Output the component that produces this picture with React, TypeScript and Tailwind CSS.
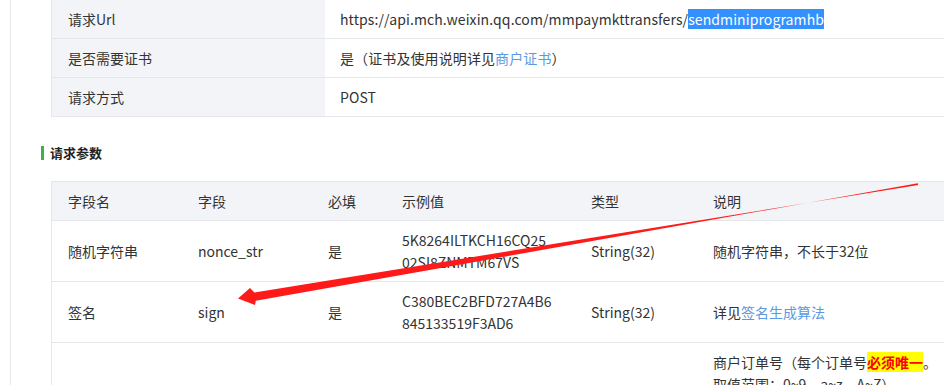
import React from "react"

const font = { fontFamily: '"Noto Sans CJK SC", "Noto Sans", sans-serif' }

const infoRows: { label: string; value: React.ReactNode }[] = [
  {
    label: "请求Url",
    value: (
      <>
        https://api.mch.weixin.qq.com/mmpaymkttransfers/
        <span className="bg-[#3390ff] text-white">sendminiprogramhb</span>
      </>
    ),
  },
  {
    label: "是否需要证书",
    value: (
      <>
        是（证书及使用说明详见<span className="text-[#5b99e3]">商户证书</span>）
      </>
    ),
  },
  { label: "请求方式", value: "POST" },
]

const colWidths = ["w-[130px]", "w-[130px]", "w-[74px]", "w-[189px]", "w-[122px]", "w-[260px]"]

const params: React.ReactNode[][] = [
  ["字段名", "字段", "必填", "示例值", "类型", "说明"],
  [
    "随机字符串",
    "nonce_str",
    "是",
    <>
      5K8264ILTKCH16CQ25
      <br />
      02SI8ZNMTM67VS
    </>,
    "String(32)",
    "随机字符串，不长于32位",
  ],
  [
    "签名",
    "sign",
    "是",
    <>
      C380BEC2BFD727A4B6
      <br />
      845133519F3AD6
    </>,
    "String(32)",
    <>
      详见<span className="text-[#5b99e3]">签名生成算法</span>
    </>,
  ],
]

function Arrow() {
  // tapered red annotation arrow pointing at the "sign" row
  return (
    <svg className="absolute left-0 top-0 pointer-events-none" width="944" height="385">
      <polygon
        fill="#ff1a1a"
        points="238,298.5 250,288 254.5,292.4 918.2,184.9 917.8,183.2 255.8,300.8 255,305"
      />
    </svg>
  )
}

export default function App() {
  return (
    <div className="relative w-[944px] h-[385px] overflow-hidden bg-white text-[14px] text-[#333] leading-[22px]" style={font}>
      <div className="flex h-full">
        <div className="w-[11px] shrink-0 border-r border-[#e6e7ea]" />
        <div className="flex-1">
          {/* request info table */}
          <div className="ml-[40px] w-[1000px] border-l border-[#e4e6eb]">
            {infoRows.map((row) => (
              <div key={row.label} className="flex border-b border-[#e4e6eb]">
                <div className="w-[273px] shrink-0 bg-[#f3f4f8] py-2 pl-4">{row.label}</div>
                <div className="flex-1 py-2 pl-[15px] whitespace-nowrap tracking-[0.1px]">{row.value}</div>
              </div>
            ))}
          </div>

          <div className="flex items-center ml-[30px] mt-[29px] h-[14px]">
            <div className="w-[3px] h-[14px] bg-[#3cb34a]" />
            <div className="ml-[6px] text-[13px] font-bold text-[#222]">请求参数</div>
          </div>

          {/* request params table */}
          <div className="ml-[40px] mt-[21px] w-[1000px] border-l border-t border-[#e4e6eb]">
            {params.map((row, i) => (
              <div key={i} className={`flex border-b border-[#e4e6eb] ${i === 0 ? "bg-[#f3f4f8]" : ""}`}>
                {row.map((cell, j) => (
                  <div key={j} className={`${colWidths[j]} shrink-0 flex items-center py-2 pl-4 whitespace-nowrap`}>
                    <div>{cell}</div>
                  </div>
                ))}
              </div>
            ))}
            <div className="flex border-b border-[#e4e6eb]">
              <div className="w-[645px] shrink-0" />
              <div className="w-[260px] py-2 pl-4 whitespace-nowrap">
                商户订单号（每个订单号<span className="bg-[#ffff00] text-[#ff0000] font-bold">必须唯一</span>。
                <br />
                取值范围：0~9，a~z，A~Z）
              </div>
            </div>
          </div>
        </div>
      </div>
      <Arrow />
    </div>
  )
}
